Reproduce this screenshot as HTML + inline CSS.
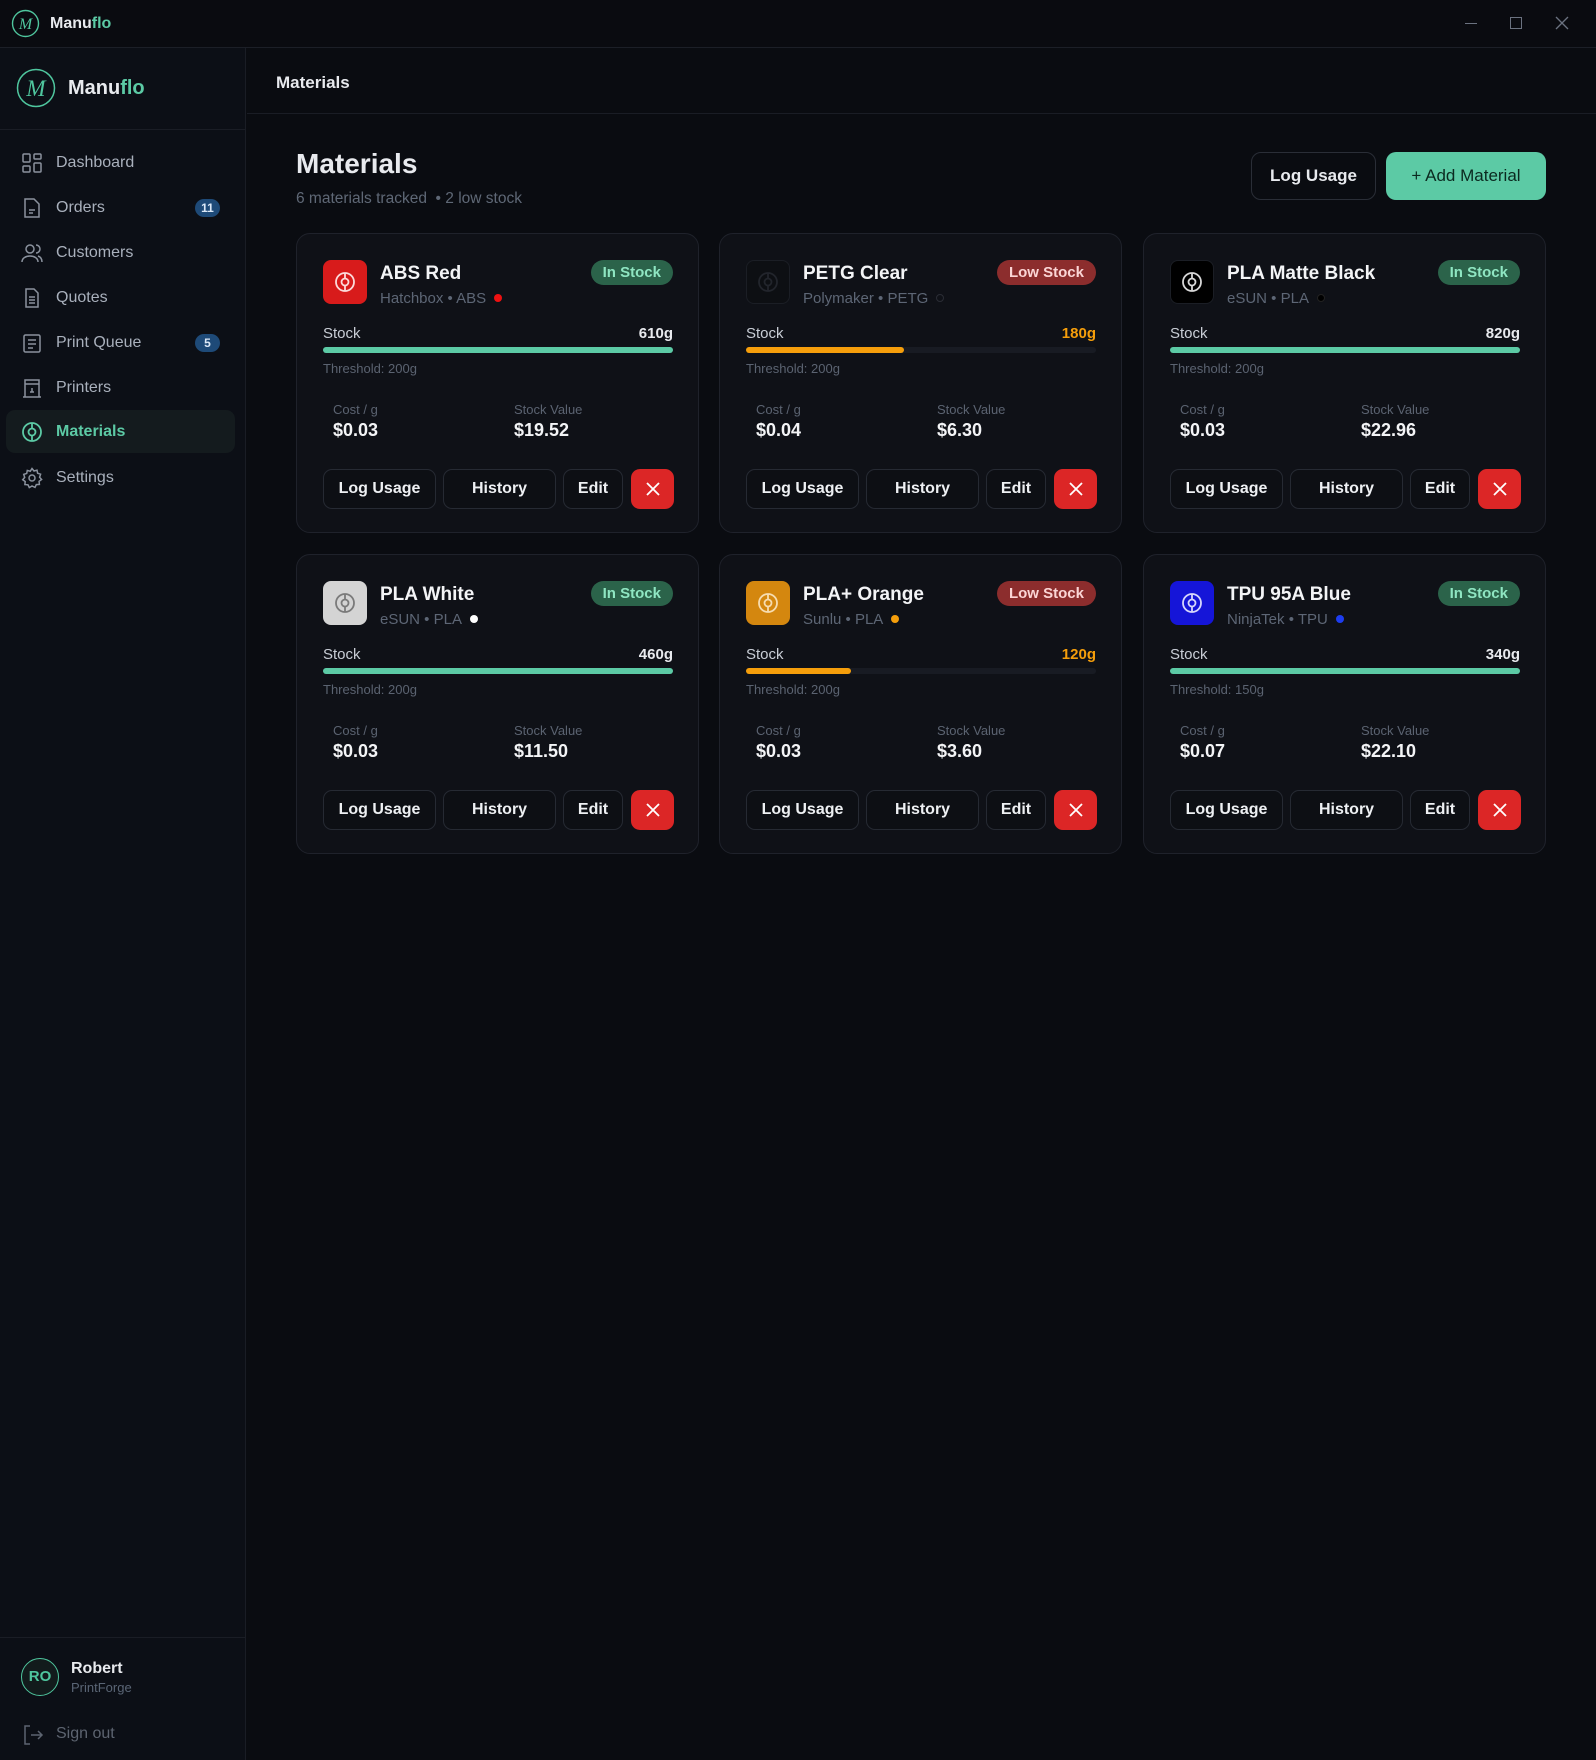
<!DOCTYPE html>
<html><head><meta charset="utf-8"><style>
*{box-sizing:border-box;margin:0;padding:0}
body{width:1596px;height:1760px;background:#0a0c11;font-family:"Liberation Sans",sans-serif;color:#e8eaee;position:relative;overflow:hidden}
.abs{position:absolute}
.tb{left:0;top:0;width:1596px;height:48px;background:#0a0b10;border-bottom:1px solid #1c1f27}
.sb{left:0;top:48px;width:246px;height:1712px;background:#0c0f16;border-right:1px solid #1a1d25}
.nav{position:absolute;left:0;width:246px;height:40px;display:flex;align-items:center;font-size:16px;color:#a9b0bc}
.nav svg{position:absolute;left:21px}
.nav span.t{position:absolute;left:56px}
.badge{position:absolute;left:195px;width:25px;height:18px;border-radius:9px;background:#1e4a78;color:#dbe8f7;font-size:12px;font-weight:bold;text-align:center;line-height:18px}
.card{position:absolute;width:403px;height:300px;background:#0f1117;border:1px solid #1f222b;border-radius:14px}
.ic{position:absolute;left:26px;top:26px;width:44px;height:44px;border-radius:8px;display:flex;align-items:center;justify-content:center}
.nm{position:absolute;left:83px;top:29px;font-size:19px;font-weight:bold;color:#f3f4f6}
.sub{position:absolute;left:83px;top:56px;font-size:15px;color:#5d6675}
.sub i{display:inline-block;width:8px;height:8px;border-radius:50%;margin-left:8px;vertical-align:1px}
.bd{position:absolute;right:25px;top:26px;height:25px;padding:0 12px;border-radius:13px;font-size:15px;font-weight:bold;line-height:25px}
.in{background:#2b634a;color:#8fe6c2}.low{background:#8c2d2d;color:#fbd5d5}
.sl{position:absolute;left:26px;top:91px;font-size:15px;color:#c9ced6}
.sv{position:absolute;right:25px;top:91px;font-size:15px;font-weight:bold}
.bar{position:absolute;left:26px;right:25px;top:113px;height:6px;border-radius:3px;background:#181b23}
.bar div{height:6px;border-radius:3px}
.th{position:absolute;left:26px;top:127px;font-size:13px;color:#5b6371}
.cl{position:absolute;top:168px;font-size:13px;color:#5b6371}
.cv{position:absolute;top:186px;font-size:18px;font-weight:bold;color:#f3f4f6}
.btn{position:absolute;top:235px;height:40px;border:1px solid #262a33;border-radius:9px;background:#0d0f14;font-size:16px;font-weight:bold;color:#eef0f3;display:flex;align-items:center;justify-content:center}
.x{background:#dc2626;border-color:#dc2626}
</style></head><body>
<div class="abs tb">
<svg class="abs" style="left:11px;top:9px" width="29" height="29"><circle cx="14.5" cy="14.5" r="13" fill="none" stroke="#4fc69e" stroke-width="1.4"/><text x="14.5" y="20" text-anchor="middle" font-family="Liberation Serif" font-style="italic" font-size="16" fill="#4fc69e">M</text></svg>
<div class="abs" style="left:50px;top:15px;font-size:16px;font-weight:bold">Manu<span style="color:#5ccaa5">flo</span></div>
<div class="abs" style="left:1465px;top:23px;width:12px;height:1px;background:#6b7280"></div>
<div class="abs" style="left:1510px;top:17px;width:12px;height:12px;border:1px solid #6b7280"></div>
<svg class="abs" style="left:1555px;top:16px" width="14" height="14"><path d="M1 1L13 13M13 1L1 13" stroke="#6b7280" stroke-width="1.3"/></svg>
</div>
<div class="abs sb">
<svg class="abs" style="left:16px;top:20px" width="40" height="40"><circle cx="20" cy="20" r="18.5" fill="none" stroke="#4fc69e" stroke-width="1.5"/><text x="20" y="28" text-anchor="middle" font-family="Liberation Serif" font-style="italic" font-size="23" fill="#4fc69e">M</text></svg>
<div class="abs" style="left:68px;top:29px;font-size:20px;font-weight:bold">Manu<span style="color:#5ccaa5">flo</span></div>
<div class="abs" style="left:0;top:81px;width:246px;height:1px;background:#1a1d25"></div>
<div class="nav" style="top:95px"><svg width="22" height="22" fill="none" stroke="#8b929e" stroke-width="1.5"><rect x="2" y="2" width="7" height="8" rx="1"/><rect x="13" y="2" width="7" height="5" rx="1"/><rect x="2" y="14" width="7" height="6" rx="1"/><rect x="13" y="11" width="7" height="9" rx="1"/></svg><span class="t">Dashboard</span></div>
<div class="nav" style="top:140px"><svg width="22" height="22" fill="none" stroke="#8b929e" stroke-width="1.5"><path d="M4 2h9l5 5v13H4z"/><path d="M8 13h6M8 16h4"/></svg><span class="t">Orders</span><div class="badge">11</div></div>
<div class="nav" style="top:185px"><svg width="22" height="22" fill="none" stroke="#8b929e" stroke-width="1.5"><circle cx="9" cy="7" r="4"/><path d="M1 20c0-4 4-6 8-6s8 2 8 6M15 3a4 4 0 010 8M21 20c0-3-1-5-4-6"/></svg><span class="t">Customers</span></div>
<div class="nav" style="top:230px"><svg width="22" height="22" fill="none" stroke="#8b929e" stroke-width="1.5"><path d="M5 2h8l4 4v14H5z"/><path d="M8 10h6M8 13h6M8 16h6"/></svg><span class="t">Quotes</span></div>
<div class="nav" style="top:275px"><svg width="22" height="22" fill="none" stroke="#8b929e" stroke-width="1.5"><rect x="3" y="3" width="16" height="17" rx="1.5"/><path d="M7 8h8M7 12h8M7 16h5"/></svg><span class="t">Print Queue</span><div class="badge">5</div></div>
<div class="nav" style="top:320px"><svg width="22" height="22" fill="none" stroke="#8b929e" stroke-width="1.5"><path d="M4 20V3h14v17M2 20h18M4 7h14M11 11v4M9 15h4"/></svg><span class="t">Printers</span></div>
<div class="abs" style="left:6px;top:362px;width:229px;height:43px;border-radius:9px;background:#141b1e"></div>
<div class="nav" style="top:364px;color:#5ccaa5;font-weight:bold"><svg width="22" height="22" fill="none" stroke="#5ccaa5" stroke-width="1.8"><circle cx="11" cy="11" r="9"/><circle cx="11" cy="11" r="3.5"/><path d="M11 2v5.5M11 14.5V20"/></svg><span class="t">Materials</span></div>
<div class="nav" style="top:410px"><svg width="22" height="22" fill="none" stroke="#8b929e" stroke-width="1.5"><circle cx="11" cy="11" r="3"/><path d="M11 1.5l2 2.5 3-.8.6 3 3 1-1 3 2 2.3-2.5 1.8.3 3.1-3.1.2-1.3 2.8L11 19l-2.7 1.6L7 17.8l-3.1-.2.3-3.1L1.7 12.7 3.7 10.4l-1-3 3-1 .6-3 3 .8z"/></svg><span class="t">Settings</span></div>
<div class="abs" style="left:0;top:1589px;width:246px;height:1px;background:#1a1d25"></div>
<div class="abs" style="left:21px;top:1610px;width:38px;height:38px;border-radius:50%;border:1.5px solid #4fc69e;background:#121b1c;color:#4fc69e;font-size:15px;font-weight:bold;text-align:center;line-height:35px">RO</div>
<div class="abs" style="left:71px;top:1612px;font-size:16px;font-weight:bold">Robert</div>
<div class="abs" style="left:71px;top:1632px;font-size:13px;color:#5a6575">PrintForge</div>
<svg class="abs" style="left:22px;top:1676px" width="22" height="22" fill="none" stroke="#5d6470" stroke-width="1.5"><path d="M8 2H3v18h5M9 11h11M16 7l4 4-4 4"/></svg>
<div class="abs" style="left:56px;top:1677px;font-size:16px;color:#5d6470">Sign out</div>
</div>
<div class="abs" style="left:276px;top:73px;font-size:17px;font-weight:bold">Materials</div>
<div class="abs" style="left:247px;top:113px;width:1349px;height:1px;background:#1a1d25"></div>
<div class="abs" style="left:296px;top:148px;font-size:28px;font-weight:bold">Materials</div>
<div class="abs" style="left:296px;top:190px;font-size:15.5px;color:#5f6876">6 materials tracked &nbsp;• 2 low stock</div>
<div class="abs" style="left:1251px;top:152px;width:125px;height:48px;border:1px solid #2a2e37;border-radius:10px;display:flex;align-items:center;justify-content:center;font-size:17px;font-weight:bold">Log Usage</div>
<div class="abs" style="left:1386px;top:152px;width:160px;height:48px;border-radius:10px;background:#5ccaa5;display:flex;align-items:center;justify-content:center;font-size:17px;color:#0b2a20">+ Add Material</div>

<div class="card" style="left:296px;top:233px">
<div class="ic" style="background:#d81b1b"><svg width="24" height="24" fill="none" stroke="#fcdada" stroke-width="1.8"><circle cx="12" cy="12" r="9"/><circle cx="12" cy="12" r="3.5"/><path d="M12 3v5.5M12 15.5V21"/></svg></div>
<div class="nm">ABS Red</div><div class="sub">Hatchbox • ABS<i style="background:#e11"></i></div><div class="bd in">In Stock</div>
<div class="sl">Stock</div><div class="sv">610g</div><div class="bar"><div style="width:100%;background:#5ccaa5"></div></div><div class="th">Threshold: 200g</div>
<div class="cl" style="left:36px">Cost / g</div><div class="cv" style="left:36px">$0.03</div><div class="cl" style="left:217px">Stock Value</div><div class="cv" style="left:217px">$19.52</div>
<div class="btn" style="left:26px;width:113px">Log Usage</div><div class="btn" style="left:146px;width:113px">History</div><div class="btn" style="left:266px;width:60px">Edit</div><div class="btn x" style="left:334px;width:43px"><svg width="14" height="14"><path d="M1 1L13 13M13 1L1 13" stroke="#fff" stroke-width="1.8"/></svg></div>
</div>
<div class="card" style="left:719px;top:233px">
<div class="ic" style="background:#0d0f13;border:1px solid #1b1e25"><svg width="24" height="24" fill="none" stroke="#22252c" stroke-width="1.8"><circle cx="12" cy="12" r="9"/><circle cx="12" cy="12" r="3.5"/><path d="M12 3v5.5M12 15.5V21"/></svg></div>
<div class="nm">PETG Clear</div><div class="sub">Polymaker • PETG<i style="border:1px solid #2a2d35"></i></div><div class="bd low">Low Stock</div>
<div class="sl">Stock</div><div class="sv" style="color:#f59e0b">180g</div><div class="bar"><div style="width:45%;background:#f59e0b"></div></div><div class="th">Threshold: 200g</div>
<div class="cl" style="left:36px">Cost / g</div><div class="cv" style="left:36px">$0.04</div><div class="cl" style="left:217px">Stock Value</div><div class="cv" style="left:217px">$6.30</div>
<div class="btn" style="left:26px;width:113px">Log Usage</div><div class="btn" style="left:146px;width:113px">History</div><div class="btn" style="left:266px;width:60px">Edit</div><div class="btn x" style="left:334px;width:43px"><svg width="14" height="14"><path d="M1 1L13 13M13 1L1 13" stroke="#fff" stroke-width="1.8"/></svg></div>
</div>
<div class="card" style="left:1143px;top:233px">
<div class="ic" style="background:#000;border:1px solid #1b1e25"><svg width="24" height="24" fill="none" stroke="#d8d8d8" stroke-width="1.8"><circle cx="12" cy="12" r="9"/><circle cx="12" cy="12" r="3.5"/><path d="M12 3v5.5M12 15.5V21"/></svg></div>
<div class="nm">PLA Matte Black</div><div class="sub">eSUN • PLA<i style="background:#000;border:1px solid #222"></i></div><div class="bd in">In Stock</div>
<div class="sl">Stock</div><div class="sv">820g</div><div class="bar"><div style="width:100%;background:#5ccaa5"></div></div><div class="th">Threshold: 200g</div>
<div class="cl" style="left:36px">Cost / g</div><div class="cv" style="left:36px">$0.03</div><div class="cl" style="left:217px">Stock Value</div><div class="cv" style="left:217px">$22.96</div>
<div class="btn" style="left:26px;width:113px">Log Usage</div><div class="btn" style="left:146px;width:113px">History</div><div class="btn" style="left:266px;width:60px">Edit</div><div class="btn x" style="left:334px;width:43px"><svg width="14" height="14"><path d="M1 1L13 13M13 1L1 13" stroke="#fff" stroke-width="1.8"/></svg></div>
</div>
<div class="card" style="left:296px;top:554px">
<div class="ic" style="background:#d4d4d4"><svg width="24" height="24" fill="none" stroke="#7a7a7a" stroke-width="1.8"><circle cx="12" cy="12" r="9"/><circle cx="12" cy="12" r="3.5"/><path d="M12 3v5.5M12 15.5V21"/></svg></div>
<div class="nm">PLA White</div><div class="sub">eSUN • PLA<i style="background:#fff"></i></div><div class="bd in">In Stock</div>
<div class="sl">Stock</div><div class="sv">460g</div><div class="bar"><div style="width:100%;background:#5ccaa5"></div></div><div class="th">Threshold: 200g</div>
<div class="cl" style="left:36px">Cost / g</div><div class="cv" style="left:36px">$0.03</div><div class="cl" style="left:217px">Stock Value</div><div class="cv" style="left:217px">$11.50</div>
<div class="btn" style="left:26px;width:113px">Log Usage</div><div class="btn" style="left:146px;width:113px">History</div><div class="btn" style="left:266px;width:60px">Edit</div><div class="btn x" style="left:334px;width:43px"><svg width="14" height="14"><path d="M1 1L13 13M13 1L1 13" stroke="#fff" stroke-width="1.8"/></svg></div>
</div>
<div class="card" style="left:719px;top:554px">
<div class="ic" style="background:#d4870f"><svg width="24" height="24" fill="none" stroke="#f6dcb0" stroke-width="1.8"><circle cx="12" cy="12" r="9"/><circle cx="12" cy="12" r="3.5"/><path d="M12 3v5.5M12 15.5V21"/></svg></div>
<div class="nm">PLA+ Orange</div><div class="sub">Sunlu • PLA<i style="background:#f59e0b"></i></div><div class="bd low">Low Stock</div>
<div class="sl">Stock</div><div class="sv" style="color:#f59e0b">120g</div><div class="bar"><div style="width:30%;background:#f59e0b"></div></div><div class="th">Threshold: 200g</div>
<div class="cl" style="left:36px">Cost / g</div><div class="cv" style="left:36px">$0.03</div><div class="cl" style="left:217px">Stock Value</div><div class="cv" style="left:217px">$3.60</div>
<div class="btn" style="left:26px;width:113px">Log Usage</div><div class="btn" style="left:146px;width:113px">History</div><div class="btn" style="left:266px;width:60px">Edit</div><div class="btn x" style="left:334px;width:43px"><svg width="14" height="14"><path d="M1 1L13 13M13 1L1 13" stroke="#fff" stroke-width="1.8"/></svg></div>
</div>
<div class="card" style="left:1143px;top:554px">
<div class="ic" style="background:#1515d8"><svg width="24" height="24" fill="none" stroke="#d6d6fb" stroke-width="1.8"><circle cx="12" cy="12" r="9"/><circle cx="12" cy="12" r="3.5"/><path d="M12 3v5.5M12 15.5V21"/></svg></div>
<div class="nm">TPU 95A Blue</div><div class="sub">NinjaTek • TPU<i style="background:#1d3df0"></i></div><div class="bd in">In Stock</div>
<div class="sl">Stock</div><div class="sv">340g</div><div class="bar"><div style="width:100%;background:#5ccaa5"></div></div><div class="th">Threshold: 150g</div>
<div class="cl" style="left:36px">Cost / g</div><div class="cv" style="left:36px">$0.07</div><div class="cl" style="left:217px">Stock Value</div><div class="cv" style="left:217px">$22.10</div>
<div class="btn" style="left:26px;width:113px">Log Usage</div><div class="btn" style="left:146px;width:113px">History</div><div class="btn" style="left:266px;width:60px">Edit</div><div class="btn x" style="left:334px;width:43px"><svg width="14" height="14"><path d="M1 1L13 13M13 1L1 13" stroke="#fff" stroke-width="1.8"/></svg></div>
</div>
</body></html>
